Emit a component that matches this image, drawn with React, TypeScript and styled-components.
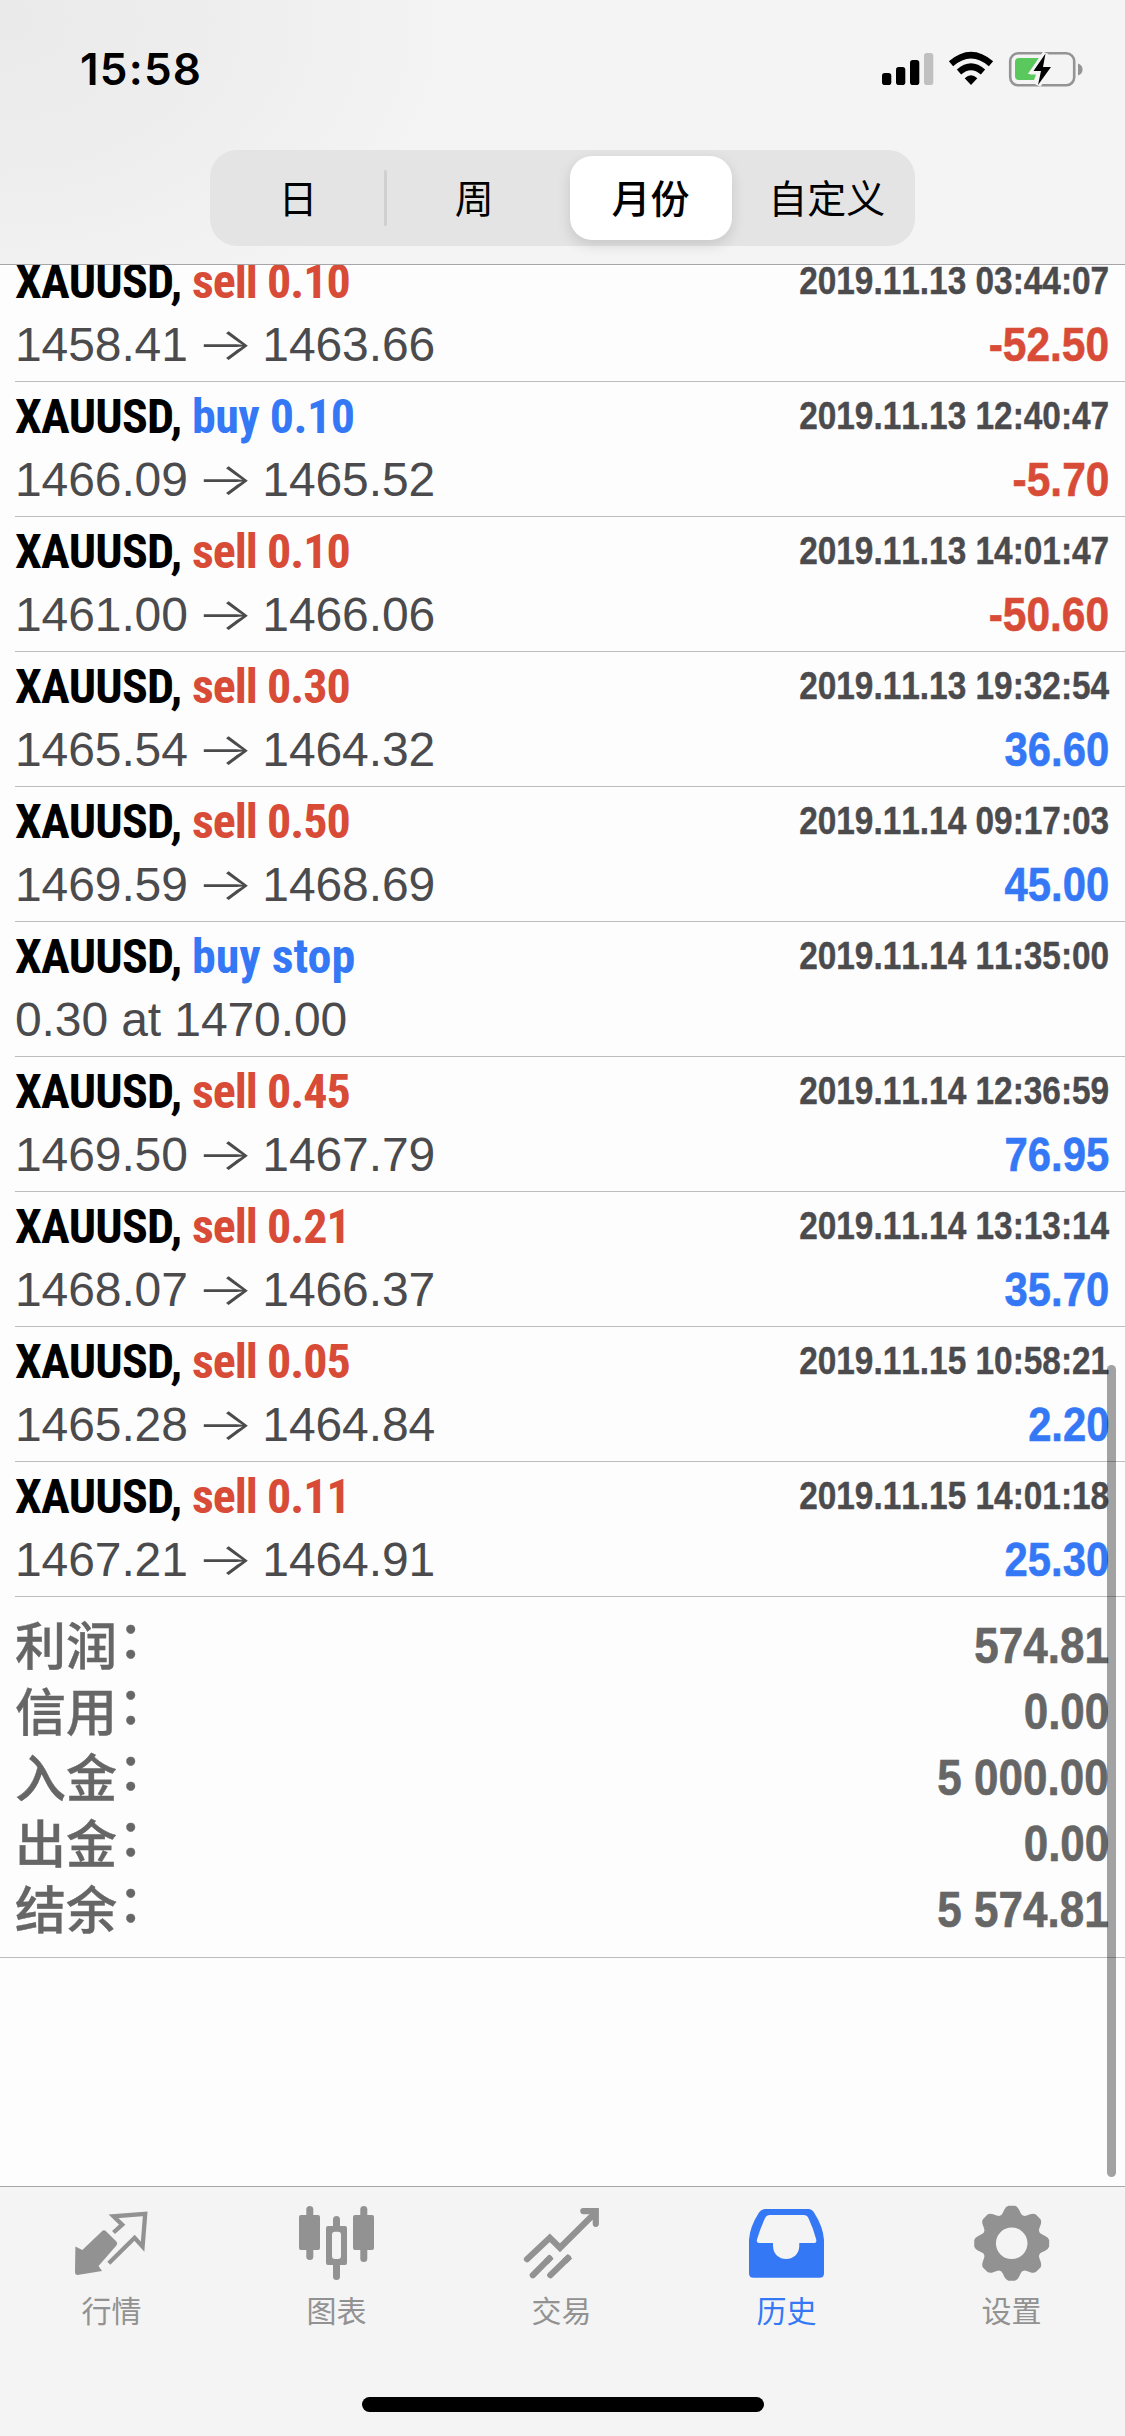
import React from "react";
import styled, { createGlobalStyle } from "styled-components";

const BLUE = "#3478f6";
const RED = "#d84b37";
const GREY = "#929292";
const CJK = '"Noto Sans CJK SC", sans-serif';
const HELV = '"Liberation Sans", "Noto Sans CJK SC", sans-serif';
const NARROW = '"Roboto Condensed", Roboto, "Liberation Sans", sans-serif';

const GlobalStyle = createGlobalStyle`
  * { box-sizing: border-box; }
  body { margin: 0; background: #fdfdfd; }
`;

const Screen = styled.main`
  position: relative;
  display: flex;
  flex-direction: column;
  width: 1125px;
  height: 2436px;
  overflow: hidden;
  background: #fdfdfd;
`;

const Header = styled.header`
  flex: none;
  display: flex;
  flex-direction: column;
  align-items: center;
  height: 265px;
  border-bottom: 1px solid #a6a6a8;
  background: radial-gradient(ellipse 460px 330px at 0 20px, #eaeaea 0%, #eeeeee 50%, #f4f4f4 100%);
`;

const StatusBar = styled.div`
  display: flex;
  justify-content: space-between;
  align-items: flex-start;
  width: 100%;
  height: 150px;
  padding: 42px 41px 0 80px;
`;

const Clock = styled.time`
  font: 600 44px/54px Inter, sans-serif;
  letter-spacing: 1.2px;
  color: #000;
`;

const StatusIcons = styled.svg`
  display: block;
  width: 204px;
  height: 54px;
`;

const Segmented = styled.div`
  display: flex;
  width: 705px;
  height: 96px;
  padding: 6px 0;
  border-radius: 27px;
  background: #e4e4e4;
`;

const Segment = styled.button<{ $active?: boolean; $divided?: boolean }>`
  flex: 1;
  display: flex;
  align-items: flex-start;
  justify-content: center;
  margin: 0 7px;
  padding: 10px 0 0;
  border: 0;
  border-radius: 22px;
  position: relative;
  font: ${p => (p.$active ? 500 : 400)} 39px/60px ${CJK};
  color: #000;
  white-space: nowrap;
  background: ${p => (p.$active ? "#fff" : "transparent")};
  box-shadow: ${p => (p.$active ? "0 5px 14px rgba(0, 0, 0, 0.13)" : "none")};
  &::after {
    content: "";
    display: ${p => (p.$divided ? "block" : "none")};
    position: absolute;
    right: -8px;
    top: 14px;
    width: 3px;
    height: 56px;
    border-radius: 2px;
    background: #d0d0d0;
  }
`;

const Scroller = styled.section`
  flex: 1;
  min-height: 0;
  overflow: hidden;
`;

const List = styled.ul`
  list-style: none;
  margin: -18px 0 0;
  padding: 0 0 0 15px;
`;

const Row = styled.li`
  display: flex;
  justify-content: space-between;
  height: 135px;
  padding: 7px 16px 0 0;
  border-bottom: 1px solid #bdbdbf;
`;

const Column = styled.div<{ $end?: boolean }>`
  display: flex;
  flex-direction: column;
  align-items: ${p => (p.$end ? "flex-end" : "flex-start")};
`;

const Title = styled.div`
  height: 55px;
  font: 700 48px/55px ${NARROW};
  letter-spacing: -0.75px;
  white-space: pre;
  color: #000;
`;

const Side = styled.span<{ $side: "buy" | "sell"; $pending: boolean }>`
  color: ${p => (p.$side === "buy" ? BLUE : RED)};
  letter-spacing: ${p => (p.$pending ? "0px" : p.$side === "buy" ? "-0.5px" : "-1px")};
`;

const Price = styled.div`
  font: 400 48px/71px ${HELV};
  letter-spacing: -0.1px;
  white-space: pre;
  color: #4b4b4d;
`;

const Arrow = styled.span`
  display: inline-block;
  width: 48px;
  font: 300 45px/40px Inter, sans-serif;
  text-align: center;
  transform: translateY(-1px) scaleX(1.34);
`;

const Stamp = styled.time`
  height: 55px;
  font: 700 39px/53px ${HELV};
  font-kerning: none;
  -webkit-text-stroke: 0.4px;
  white-space: nowrap;
  color: #4b4b4e;
  transform: scaleX(0.856);
  transform-origin: right;
`;

const Profit = styled.div<{ $loss: boolean }>`
  font: 700 48px/71px ${HELV};
  font-kerning: none;
  -webkit-text-stroke: 0.6px;
  color: ${p => (p.$loss ? RED : BLUE)};
  transform: scaleX(${p => (p.$loss ? 0.885 : 0.87)});
  transform-origin: right;
`;

const Summary = styled.dl`
  height: 361px;
  margin: 0;
  padding: 16px 16px 0 15px;
  border-bottom: 1px solid #bdbdbf;
`;

const SummaryRow = styled.div`
  display: flex;
  justify-content: space-between;
  align-items: flex-start;
  height: 66px;
  color: #666;
`;

const Label = styled.dt`
  display: flex;
  font: 500 51px/60px ${CJK};
  -webkit-text-stroke: 0.4px;
`;

const Colon = styled.span`
  padding-left: 1px;
  line-height: 46px;
`;

const Total = styled.dd`
  margin: 0;
  font: 700 50px/67px ${HELV};
  font-kerning: none;
  -webkit-text-stroke: 0.6px;
  transform: scaleX(0.88);
  transform-origin: right;
`;

const ScrollThumb = styled.div`
  position: absolute;
  right: 9px;
  top: 1365px;
  width: 9px;
  height: 812px;
  border-radius: 5px;
  background: rgba(0, 0, 0, 0.36);
`;

const TabBar = styled.nav`
  position: relative;
  flex: none;
  display: flex;
  height: 250px;
  border-top: 1px solid #a6a6a8;
  background: #f4f4f4;
`;

const Tab = styled.a<{ $active?: boolean }>`
  flex: 1;
  display: flex;
  flex-direction: column;
  align-items: center;
  padding: 13px 2px 0 0;
  color: ${p => (p.$active ? BLUE : GREY)};
  font: 400 30px/44px ${CJK};
  svg {
    display: block;
    width: 80px;
    height: 84px;
    margin-bottom: 3px;
  }
`;

const HomeIndicator = styled.div`
  position: absolute;
  left: 362px;
  bottom: 24px;
  width: 402px;
  height: 15px;
  border-radius: 8px;
  background: #000;
`;

type Deal = { side: "buy" | "sell"; volume: string; from?: string; to?: string; note?: string; time: string; profit?: string };

const deals: Deal[] = [
  { side: "sell", volume: "0.10", from: "1458.41", to: "1463.66", time: "2019.11.13 03:44:07", profit: "-52.50" },
  { side: "buy", volume: "0.10", from: "1466.09", to: "1465.52", time: "2019.11.13 12:40:47", profit: "-5.70" },
  { side: "sell", volume: "0.10", from: "1461.00", to: "1466.06", time: "2019.11.13 14:01:47", profit: "-50.60" },
  { side: "sell", volume: "0.30", from: "1465.54", to: "1464.32", time: "2019.11.13 19:32:54", profit: "36.60" },
  { side: "sell", volume: "0.50", from: "1469.59", to: "1468.69", time: "2019.11.14 09:17:03", profit: "45.00" },
  { side: "buy", volume: "stop", note: "0.30 at 1470.00", time: "2019.11.14 11:35:00" },
  { side: "sell", volume: "0.45", from: "1469.50", to: "1467.79", time: "2019.11.14 12:36:59", profit: "76.95" },
  { side: "sell", volume: "0.21", from: "1468.07", to: "1466.37", time: "2019.11.14 13:13:14", profit: "35.70" },
  { side: "sell", volume: "0.05", from: "1465.28", to: "1464.84", time: "2019.11.15 10:58:21", profit: "2.20" },
  { side: "sell", volume: "0.11", from: "1467.21", to: "1464.91", time: "2019.11.15 14:01:18", profit: "25.30" },
];

const totals = [
  ["利润", "574.81"],
  ["信用", "0.00"],
  ["入金", "5 000.00"],
  ["出金", "0.00"],
  ["结余", "5 574.81"],
];

const polar = (r: number, deg: number) => {
  const a = (deg * Math.PI) / 180;
  return `${(39.7 + r * Math.sin(a)).toFixed(2)} ${(43.3 - r * Math.cos(a)).toFixed(2)}`;
};

const gearPath =
  Array.from({ length: 8 }, (_, i) => {
    const t = i * 45;
    return `${i ? "L" : "M"}${polar(30, t - 20)}Q${polar(31, t - 17)} ${polar(34.3, t - 12.5)}Q${polar(37.2, t - 9)} ${polar(37.6, t - 5)}L${polar(37.6, t + 5)}Q${polar(37.2, t + 9)} ${polar(34.3, t + 12.5)}Q${polar(31, t + 17)} ${polar(30, t + 20)}`;
  }).join("") + "ZM39.7 27.5a15.8 15.8 0 1 0 0 31.6a15.8 15.8 0 1 0 0-31.6Z";

const QuotesIcon = () => (
  <svg viewBox="0 0 80 84">
    <path d="M3.4 46.5 10.3 50 30 31.2Q32 29.4 34 31.2L44.4 41.6Q46 43.5 44.4 45.4L26.5 66 30 71 5.5 75Q3 75.2 3 72.6Z" fill="currentColor" />
    <path d="M41.5 32.5 50.2 24.7 41.5 16.3 73.2 13.8 70.6 46.6 62.6 37.8 36.8 63.2" fill="none" stroke="currentColor" strokeWidth="4.3" />
  </svg>
);

const ChartIcon = () => (
  <svg viewBox="0 0 80 84" fill="currentColor">
    <rect x="9.3" y="6" width="7" height="54" rx="3.5" />
    <rect x="2" y="15" width="21" height="35" rx="2" />
    <path d="M36 27V19.500a3.500 3.500 0 0 1 7 0V27ZM36 64V76.500a3.500 3.500 0 0 0 7 0V64Z" />
    <path
      fillRule="evenodd"
      d="M31 26H48Q50 26 50 28V63Q50 65 48 65H31Q29 65 29 63V28Q29 26 31 26ZM38 31.700Q35 31.700 35 34.700V56Q35 59 38 59H41Q44 59 44 56V34.700Q44 31.700 41 31.700Z"
    />
    <rect x="63.3" y="6" width="7" height="56" rx="3.5" />
    <rect x="56" y="15" width="21" height="35" rx="2" />
  </svg>
);

const TradeIcon = () => (
  <svg viewBox="0 0 80 84" fill="none" stroke="currentColor" strokeWidth="6.2" strokeLinecap="round">
    <path d="M5 59.2 27.8 37.8 38 47.8 73 13" />
    <path d="M61.3 11.1H73.8V23.8" />
    <path d="M10.8 75.2 27.5 58.4M28.3 75.2 46 58" />
    <path d="M24 62 29.4 56.6M42.6 61.4 48 56.2" strokeLinecap="butt" />
  </svg>
);

const HistoryIcon = () => (
  <svg viewBox="0 0 80 84">
    <path
      fill="currentColor"
      fillRule="evenodd"
      d="M18.5 9H61.5Q65 9 67 12.5Q76.3 27 77 40V73.2Q77 77.7 72.5 77.7H6.5Q2 77.7 2 73.2V40Q2.700 27 12 12.500Q14.500 9 18.500 9ZM23 15Q19.500 15 18 18.300Q13 29 10 39.500Q9 43 12.300 43H26V45.500C26 63.500 52.300 63.500 52.300 45.500V43H66.700Q70 43 69.200 39.500Q66.500 29 61.500 18.300Q60 15 56.500 15Z"
    />
  </svg>
);

const SettingsIcon = () => (
  <svg viewBox="0 0 80 84">
    <path d={gearPath} fill="currentColor" fillRule="evenodd" />
  </svg>
);

const tabs = [
  { label: "行情", Icon: QuotesIcon },
  { label: "图表", Icon: ChartIcon },
  { label: "交易", Icon: TradeIcon },
  { label: "历史", Icon: HistoryIcon, active: true },
  { label: "设置", Icon: SettingsIcon },
];

export default function App() {
  return (
    <Screen>
      <GlobalStyle />
      <Header>
        <StatusBar>
          <Clock>15:58</Clock>
          <StatusIcons viewBox="880 42 204 54">
            <rect x="882" y="73" width="9.300" height="12" rx="2.800" />
            <rect x="896" y="67" width="9.300" height="18" rx="2.800" />
            <rect x="910" y="60" width="9.300" height="25" rx="2.800" />
            <rect x="924" y="53" width="9.300" height="32" rx="2.800" fill="#c0c0c0" />
            <g fill="none" stroke="#000">
              <path d="M951 63.800Q971 46.500 991 63.800" strokeWidth="6.500" />
              <path d="M959 72Q971 61.500 983 72" strokeWidth="6.500" />
            </g>
            <path d="M964.700 78.300Q971 72.300 977.300 78.300L971 85Z" />
            <rect x="1010.200" y="53.300" width="64" height="32" rx="8" fill="none" stroke="#949494" strokeWidth="2.600" />
            <path d="M1078 63.500Q1082.500 65 1082.500 69.500T1078 75.500Z" fill="#949494" />
            <path d="M1019 58H1040L1030 74.500H1036L1034 80H1019Q1015 80 1015 76V62Q1015 58 1019 58Z" fill="#5ac85c" />
            <path d="M1045.500 53.500 1033.500 71H1041L1038 85 1051 67H1043Z" stroke="#f4f4f4" strokeWidth="6" />
            <path d="M1045.500 53.500 1033.500 71H1041L1038 85 1051 67H1043Z" />
          </StatusIcons>
        </StatusBar>
        <Segmented>
          <Segment $divided>日</Segment>
          <Segment>周</Segment>
          <Segment $active>月份</Segment>
          <Segment>自定义</Segment>
        </Segmented>
      </Header>

      <Scroller>
        <List>
          {deals.map(d => (
            <Row key={d.time}>
              <Column>
                <Title>
                  XAUUSD, <Side $side={d.side} $pending={!!d.note}>{d.side} {d.volume}</Side>
                </Title>
                <Price>
                  {d.note ?? (
                    <>
                      {d.from} <Arrow>→</Arrow> {d.to}
                    </>
                  )}
                </Price>
              </Column>
              <Column $end>
                <Stamp>{d.time}</Stamp>
                {d.profit && <Profit $loss={d.profit.startsWith("-")}>{d.profit}</Profit>}
              </Column>
            </Row>
          ))}
        </List>
        <Summary>
          {totals.map(([name, value]) => (
            <SummaryRow key={name}>
              <Label>
                {name}
                <Colon>：</Colon>
              </Label>
              <Total>{value}</Total>
            </SummaryRow>
          ))}
        </Summary>
      </Scroller>
      <ScrollThumb />

      <TabBar>
        {tabs.map(({ label, Icon, active }) => (
          <Tab key={label} $active={active}>
            <Icon />
            {label}
          </Tab>
        ))}
        <HomeIndicator />
      </TabBar>
    </Screen>
  );
}
